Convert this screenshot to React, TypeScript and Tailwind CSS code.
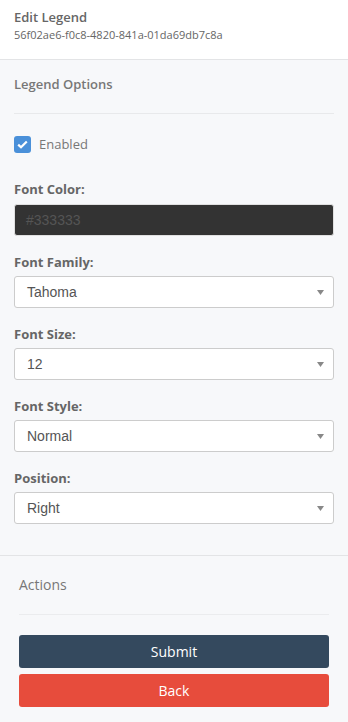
const selects = [
  { label: 'Font Family:', value: 'Tahoma' },
  { label: 'Font Size:', value: '12' },
  { label: 'Font Style:', value: 'Normal' },
  { label: 'Position:', value: 'Right' },
];

function SelectBox({ value }: { value: string }) {
  return (
    <div className="flex h-[32px] items-center justify-between rounded-[3px] border border-[#cccccc] bg-white pl-3 pr-[9px]">
      <span className="text-[14px] text-[#555555] [font-family:'Liberation_Sans',Arial,sans-serif]">{value}</span>
      <svg width="7" height="5" viewBox="0 0 7 5">
        <path d="M0 0 H7 L3.5 5 Z" fill="#888888" />
      </svg>
    </div>
  );
}

export default function App() {
  return (
    <div className="min-h-[722px] bg-[#f7f8fa] text-[#666666] [font-family:'Open_Sans',sans-serif]">
      <div className="h-[60px] border-b border-[#e3e4e6] bg-white px-[14px] pt-[7px]">
        <div className="text-[13px] font-semibold leading-[20px] text-[#666666]">Edit Legend</div>
        <div className="text-[11px] leading-[16px] text-[#666666]">56f02ae6-f0c8-4820-841a-01da69db7c8a</div>
      </div>

      <div className="px-[14px]">
        <div className="border-b border-[#e8e9eb] pt-[14px] pb-[19px] text-[13px] font-semibold leading-[20px] text-[#777777]">
          Legend Options
        </div>

        <label className="mt-[21px] flex items-center gap-[8px]">
          <span className="flex h-[17px] w-[17px] items-center justify-center rounded-[3px] bg-[#4a90d9]">
            <svg width="11" height="9" viewBox="0 0 11 9">
              <path d="M1.2 4.6 L4 7.3 L9.8 1.5" fill="none" stroke="white" strokeWidth="2.2" />
            </svg>
          </span>
          <span className="text-[13px] leading-[18px] text-[#777777]">Enabled</span>
        </label>

        <div className="mt-[26px] text-[13px] font-bold leading-[20px] text-[#666666]">Font Color:</div>
        <div className="mt-[5px] flex h-[32px] items-center rounded-[3px] border border-[#e0e0e0] bg-[#333333] px-[11px] text-[14px] text-[#555555] [font-family:'Liberation_Sans',Arial,sans-serif]">
          #333333
        </div>

        {selects.map((s) => (
          <div key={s.label}>
            <div className="mt-[16px] text-[13px] font-bold leading-[20px] text-[#666666]">{s.label}</div>
            <div className="mt-[4px]">
              <SelectBox value={s.value} />
            </div>
          </div>
        ))}
      </div>

      <div className="mt-[31px] border-t border-[#e3e4e6] px-[19px]">
        <div className="border-b border-[#ebecee] pt-[19px] pb-[19px] text-[14px] leading-[20px] text-[#777777]">
          Actions
        </div>
        <div className="mt-[20px] flex flex-col gap-[6px] pb-[14px]">
          <button className="h-[33px] rounded-[3px] bg-[#34495e] text-[14px] text-white">Submit</button>
          <button className="h-[33px] rounded-[3px] bg-[#e74c3c] text-[14px] text-white">Back</button>
        </div>
      </div>
    </div>
  );
}
